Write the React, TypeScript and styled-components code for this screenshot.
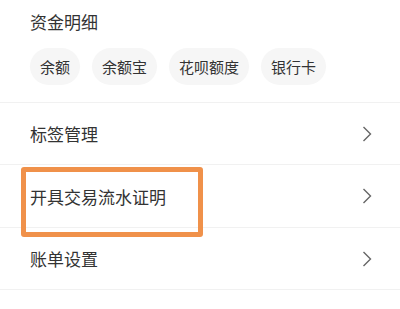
import styled, { createGlobalStyle } from 'styled-components'

const GlobalStyle = createGlobalStyle`
	html, body {
		margin: 0;
		padding: 0;
		background: #fff;
	}
	body {
		font-family: 'Noto Sans CJK SC', 'Noto Sans', sans-serif;
		color: #333;
	}
`

const Page = styled.div`
	width: 400px;
	height: 309px;
	background: #fff;
	overflow: hidden;
`
const FundSection = styled.div`
	padding: 10px 30px 17px;
	border-bottom: 1px solid #f1f1f1;
`
const SectionTitle = styled.div`
	font-size: 17px;
	line-height: 24px;
	color: #333;
`
const ChipRow = styled.div`
	display: flex;
	gap: 12px;
	margin-top: 14px;
`
const Chip = styled.div`
	height: 37px;
	padding: 0 10px;
	border-radius: 19px;
	background: #f6f6f6;
	display: flex;
	align-items: center;
	font-size: 15px;
	color: #333;
`
const MenuRow = styled.div<{ $height: number }>`
	position: relative;
	height: ${(p) => p.$height}px;
	padding: 0 28px 0 30px;
	display: flex;
	align-items: center;
	justify-content: space-between;
	border-bottom: 1px solid #f1f1f1;
	font-size: 17px;
	color: #333;
`
const Highlight = styled.div`
	position: absolute;
	left: 21px;
	top: 2px;
	width: 182px;
	height: 70px;
	box-sizing: border-box;
	border: 5px solid #f0914a;
	border-radius: 3px;
	pointer-events: none;
`

const Chevron = () => (
	<svg width="10" height="16" viewBox="0 0 10 16">
		<polyline
			points="1.5,1 8.5,8 1.5,15"
			fill="none"
			stroke="#666"
			strokeWidth="1.4"
		/>
	</svg>
)

const chips = ['余额', '余额宝', '花呗额度', '银行卡']

const menu = [
	{ label: '标签管理', height: 61, marked: false },
	{ label: '开具交易流水证明', height: 62, marked: true },
	{ label: '账单设置', height: 61, marked: false },
]

const App = () => {
	return (
		<Page>
			<GlobalStyle />
			<FundSection>
				<SectionTitle>资金明细</SectionTitle>
				<ChipRow>
					{chips.map((chip) => (
						<Chip key={chip}>{chip}</Chip>
					))}
				</ChipRow>
			</FundSection>
			{menu.map((item) => (
				<MenuRow key={item.label} $height={item.height}>
					{item.label}
					<Chevron />
					{item.marked && <Highlight />}
				</MenuRow>
			))}
		</Page>
	)
}

export default App
